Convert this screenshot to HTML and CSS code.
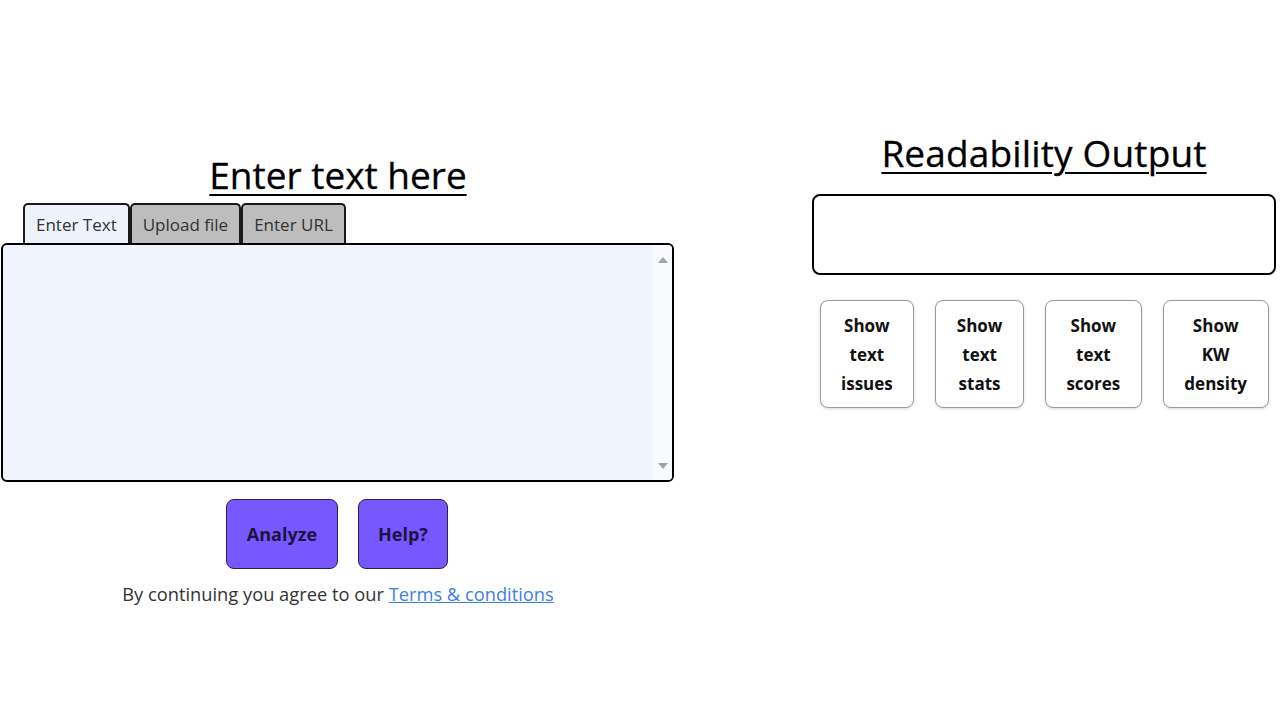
FILE: index.html
```html
<!DOCTYPE html>
<html lang="en">
<head>
<meta charset="utf-8">
<title>Readability</title>
<link rel="stylesheet" href="styles.css">
</head>
<body>
<main class="page">
  <section class="left">
    <h2 class="heading heading-left">Enter text here</h2>
    <div class="tabs">
      <div class="tab tab-active">Enter Text</div>
      <div class="tab">Upload file</div>
      <div class="tab">Enter URL</div>
    </div>
    <div class="editor">
      <textarea class="editor-input"></textarea>
      <div class="scrollbar">
        <span class="arrow arrow-up"></span>
        <span class="arrow arrow-down"></span>
      </div>
    </div>
    <div class="actions">
      <button class="action action-analyze">Analyze</button>
      <button class="action action-help">Help?</button>
    </div>
    <p class="terms">By continuing you agree to our <a href="#" class="terms-link">Terms &amp; conditions</a></p>
  </section>
  <section class="right">
    <h2 class="heading heading-right">Readability Output</h2>
    <div class="output"></div>
    <div class="options">
      <button class="option">Show text issues</button>
      <button class="option">Show text stats</button>
      <button class="option">Show text scores</button>
      <button class="option">Show KW density</button>
    </div>
  </section>
</main>
</body>
</html>
```

FILE: styles.css
```css
* { box-sizing: border-box; }

body {
  margin: 0;
  background: #ffffff;
  font-family: "Open Sans", "Noto Sans", sans-serif;
  color: #000;
}

.page {
  display: flex;
  justify-content: space-between;
  align-items: flex-start;
  width: 1280px;
}

.left {
  width: 676px;
  padding-top: 151px;
}

.right {
  width: 464px;
  margin-right: 4px;
  padding-top: 129px;
}

.heading {
  margin: 0;
  font-size: 37px;
  font-weight: 400;
  line-height: 48px;
  text-align: center;
  text-decoration: underline;
  text-decoration-thickness: 2px;
  text-underline-offset: 5px;
  color: #000;
  -webkit-text-stroke: 0.3px #000;
}

.heading-right {
  letter-spacing: 0.15px;
}

.tabs {
  display: flex;
  margin-top: 4px;
  padding-left: 23px;
}

.tab {
  height: 40px;
  padding: 0 11px;
  display: flex;
  align-items: center;
  justify-content: center;
  font-size: 17px;
  color: #333;
  background: #bdbdbd;
  border: 2px solid #1a1a1a;
  border-bottom: none;
  border-radius: 5px 5px 0 0;
}

.tab-active {
  background: #eef2fb;
}

.editor {
  display: flex;
  margin-left: 1px;
  width: 673px;
  height: 239px;
  border: 2px solid #000;
  border-radius: 6px;
  background: #f0f4fc;
  overflow: hidden;
}

.editor-input {
  flex: 1;
  border: none;
  outline: none;
  resize: none;
  background: transparent;
  font-family: inherit;
  font-size: 16px;
}

.scrollbar {
  width: 19px;
  display: flex;
  flex-direction: column;
  justify-content: space-between;
  align-items: center;
  padding: 12px 0 11px;
  background: #f9fafd;
}

.arrow {
  width: 0;
  height: 0;
  border-left: 5px solid transparent;
  border-right: 5px solid transparent;
}

.arrow-up { border-bottom: 6px solid #a3a3a3; }
.arrow-down { border-top: 6px solid #a3a3a3; }

.actions {
  display: flex;
  justify-content: center;
  gap: 20px;
  margin-top: 17px;
  padding-right: 2px;
}

.action {
  height: 70px;
  padding: 0;
  background: #7757ff;
  border: 1px solid #2a2150;
  border-radius: 8px;
  font-family: inherit;
  font-size: 18px;
  font-weight: 700;
  color: #1b1440;
}

.action-analyze { width: 112px; }
.action-help { width: 90px; }

.terms {
  margin: 13px 0 0;
  text-align: center;
  font-size: 18.3px;
  line-height: 24px;
  color: #333;
}

.terms-link {
  color: #3b7ee8;
  text-decoration: underline;
}

.output {
  height: 81px;
  margin-top: 17px;
  border: 2px solid #000;
  border-radius: 8px;
  background: #fff;
}

.options {
  display: flex;
  justify-content: center;
  gap: 21px;
  margin-top: 25px;
}

.option {
  width: min-content;
  height: 108px;
  padding: 0 20.5px;
  background: #fff;
  border: 1px solid #9a9a9a;
  border-radius: 8px;
  box-shadow: 0 1px 3px rgba(0, 0, 0, 0.15);
  font-family: inherit;
  font-size: 17px;
  font-weight: 700;
  line-height: 29px;
  color: #111;
}
```
